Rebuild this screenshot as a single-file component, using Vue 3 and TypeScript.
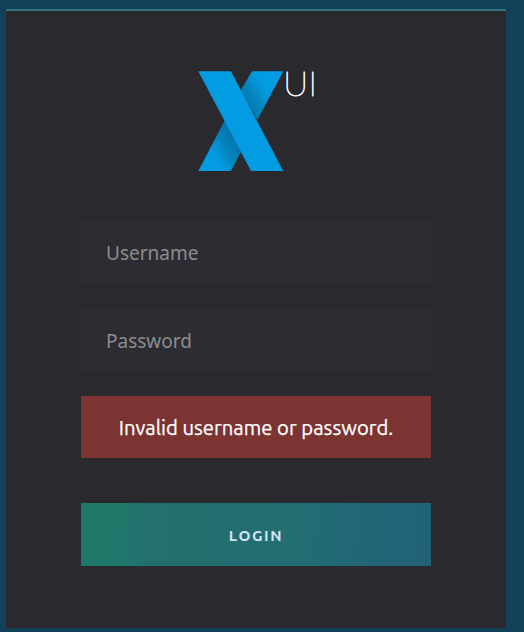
<!-- /src/App.vue -->
<template>
  <div class="login-page">
    <form class="login-card" @submit.prevent="submit">
      <svg class="logo" width="140" height="102" viewBox="0 0 140 102" role="img" aria-label="XUI">
        <defs>
          <linearGradient id="fold-top" gradientUnits="userSpaceOnUse" x1="46" y1="42" x2="72" y2="27">
            <stop offset="0" stop-color="#0671a5" />
            <stop offset="0.5" stop-color="#0583bd" />
            <stop offset="1" stop-color="#039be2" />
          </linearGradient>
          <linearGradient id="fold-bottom" gradientUnits="userSpaceOnUse" x1="38" y1="65" x2="13" y2="80">
            <stop offset="0" stop-color="#0671a5" />
            <stop offset="0.5" stop-color="#0583bd" />
            <stop offset="1" stop-color="#039be2" />
          </linearGradient>
        </defs>
        <polygon points="54,1.3 85.3,1.3 59.3,50 42.5,20.5" fill="url(#fold-top)" />
        <polygon points="0.3,101 33,101 43,82 27,50" fill="url(#fold-bottom)" />
        <polygon points="0.3,1.3 33,1.3 85.3,101 53,101" fill="#039be2" />
        <text class="logo-text" x="85.3" y="25.5">UI</text>
      </svg>
      <input v-model="username" class="field" type="text" placeholder="Username" />
      <input v-model="password" class="field" type="password" placeholder="Password" />
      <div v-if="error" class="alert"><span>{{ error }}</span></div>
      <button class="login-button" type="submit">LOGIN</button>
    </form>
  </div>
</template>

<script lang="ts" setup>
import { ref } from 'vue';

const username = ref<string>('');
const password = ref<string>('');
const error = ref<string>('Invalid username or password.');

const submit = (): void => {
  error.value = 'Invalid username or password.';
};
</script>

<style>
body {
  margin: 0;
  background: #134159;
}
</style>

<style scoped>
.login-page {
  box-sizing: border-box;
  width: 524px;
  height: 632px;
  padding: 9px 18px 4px 6px;
  background: #134159;
}

.login-card {
  box-sizing: border-box;
  display: flex;
  flex-direction: column;
  height: 619px;
  padding: 59px 75px 0;
  border-top: 2px solid #33737c;
  background: #2a292d;
}

.logo {
  display: block;
  flex: none;
  margin: 0 0 49px 117px;
  overflow: visible;
}

.logo-text {
  font-family: Lato, "Open Sans", sans-serif;
  font-size: 34.5px;
  font-weight: 200;
  letter-spacing: 0.4px;
  fill: #fff;
  stroke: #fff;
  stroke-width: 0.9px;
}

.field {
  box-sizing: border-box;
  width: 100%;
  height: 63px;
  margin: 0 0 25px;
  padding: 1px 25px 0;
  border: 0;
  border-radius: 0;
  outline: none;
  background: #2d2c32;
  color: #d0d0d4;
  font-family: "Noto Sans", sans-serif;
  font-size: 19px;
}

.field::placeholder {
  color: #8b8c8f;
  opacity: 1;
}

.alert {
  display: flex;
  align-items: center;
  justify-content: center;
  height: 62px;
  margin: -1px 0 45px;
  background: #7c3433;
  color: #fff;
  font-family: Ubuntu, "Noto Sans", sans-serif;
  font-size: 20.3px;
  -webkit-text-stroke: 0.25px #fff;
  white-space: nowrap;
}

.login-button {
  height: 63px;
  padding: 2px 0 0;
  border: 0;
  background: linear-gradient(93deg, #20786b 0%, #20786b 12%, #22706f 19%, #226e72 60%, #216577 85%, #216277 100%);
  color: #cfe3f5;
  font-family: Ubuntu, "Noto Sans", sans-serif;
  font-size: 15.2px;
  font-weight: 600;
  letter-spacing: 1.6px;
  cursor: pointer;
}
</style>
